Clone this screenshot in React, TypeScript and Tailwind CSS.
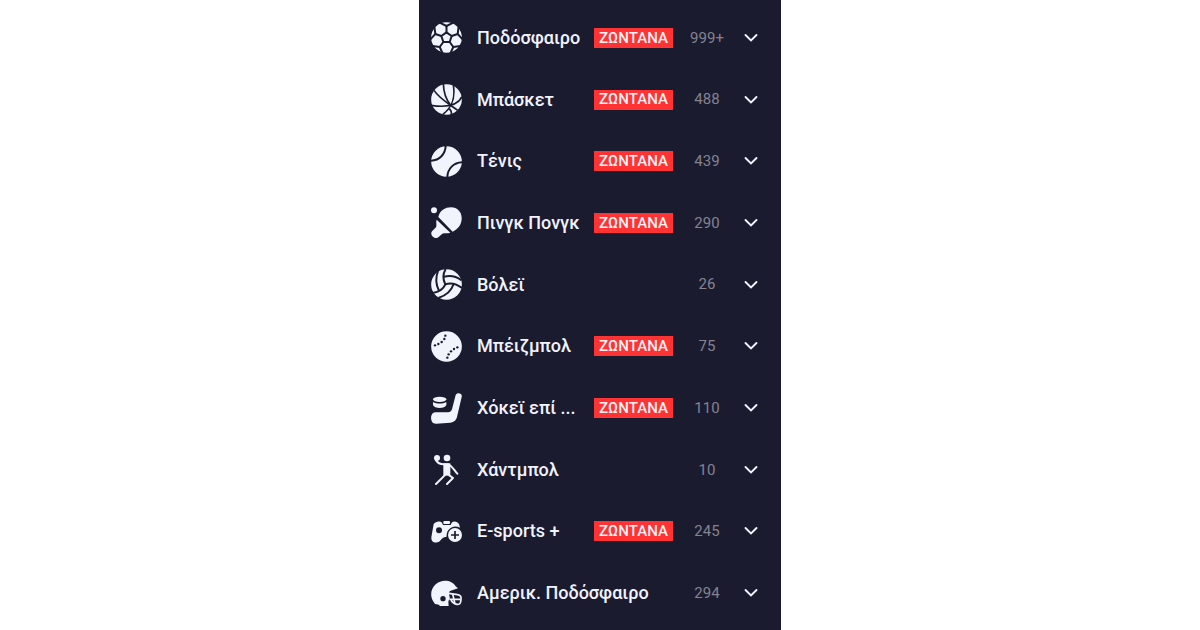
import { useState } from "react";
import type { ReactNode } from "react";
import clsx from "clsx";

type Sport = {
  name: string;
  count: string;
  live: boolean;
  icon: ReactNode;
};

// Icons share a 93 unit box, lines that cut into a shape use the panel colour.
const cut = "fill-none stroke-[#1b1b2f]";
const ball = <circle cx="46.5" cy="46.5" r="46" />;

const football = (
  <>
    {ball}
    <g className={cut} strokeWidth="6" strokeLinejoin="round">
      <path d="M46.5 31 62 42 56 60H37L31 42Z" />
      <path d="M46.5 31V12M62 42 80 36M56 60 67 75M37 60 26 75M31 42 13 36" />
      <path d="M26 2 46.5 12 67 2M83 14 80 36 95 52M88 72 67 75 58 94M35 94 26 75 5 72M-2 52 13 36 10 14" />
    </g>
  </>
);

const basketball = (
  <>
    {ball}
    <g className={cut} strokeWidth="5">
      <path d="M9 19C24 42 44 53 80 79" />
      <path d="M0 64C40 70 80 66 93 38" />
      <path d="M37 0C38 26 42 43 58 62" />
      <path d="M67 3C73 40 66 68 35 92" />
      <path d="M55 74C60 79 62 85 61 92" />
    </g>
  </>
);

const tennis = (
  <>
    {ball}
    <g className={cut} strokeWidth="6">
      <path d="M44 0C43 24 26 43 0 44" />
      <path d="M49 93C50 68 68 50 93 49" />
    </g>
  </>
);

const pingPong = (
  <>
    <circle cx="9" cy="10" r="9" />
    <path d="M22 30C26 11 42 1 60 1C79 1 92 15 92 34C92 52 82 66 65 74Z" />
    <path d="M17 38 58 77C49 80 40 77 34 80L22 91C10 99-5 84 3 73L15 61C18 54 14 46 17 38Z" />
  </>
);

const volleyball = (
  <>
    {ball}
    <g className={cut} strokeWidth="6">
      <path d="M44 0C35 15 36 32 43 46C60 40 77 45 93 57" />
      <path d="M43 46C37 60 23 69 5 72" />
      <path d="M21 6C13 27 14 46 24 65" />
      <path d="M39 23C57 19 76 22 91 34" />
      <path d="M68 45C61 66 44 80 22 87" />
    </g>
  </>
);

const baseball = (
  <>
    {ball}
    <g className="fill-[#1b1b2f]">
      {[
        [43, 14], [40, 24], [32, 33], [22, 39], [12, 43],
        [49, 80], [53, 70], [60, 61], [69, 54], [79, 49],
      ].map(([x, y]) => (
        <circle key={x} cx={x} cy={y} r="3.6" />
      ))}
    </g>
  </>
);

const hockey = (
  <>
    <ellipse cx="26" cy="19" rx="20" ry="8" />
    <path d="M6 27C18 33 34 33 46 27V36C42 48 10 48 6 36Z" />
    <path d="M74 6C78-3 95 0 92 12L78 72C75 83 69 87 58 89L16 92C-5 94-4 58 13 58H51C57 58 61 55 63 49Z" />
  </>
);

const handball = (
  <>
    <circle cx="18" cy="12" r="9" />
    <circle cx="48" cy="12" r="10" />
    <g className="fill-none stroke-[#f1f3fd]" strokeWidth="6" strokeLinecap="round" strokeLinejoin="round">
      <path d="M15 19C20 28 27 31 38 31H52C62 34 70 49 79 59" />
      <path d="M41 64 15 90M55 64 66 72 48 90" />
    </g>
    <path d="M37 28H58V65H37Z" />
  </>
);

const esports = (
  <>
    <path d="M39 15H55C58 15 58 24 55 24H39C36 24 36 15 39 15Z" />
    <path d="M8 24C14 15 28 14 33 20L36 27H59L62 20C68 14 79 16 84 24L87 35C68 25 48 37 47 57L46 63C33 61 29 78 19 79C7 82 0 76 1 64Z" />
    <circle cx="24" cy="43" r="9" className="fill-[#1b1b2f]" />
    <circle cx="72" cy="57" r="21" />
    <path className={cut} strokeWidth="5" d="M72 45V69M60 57H84" />
  </>
);

const helmet = (
  <>
    <path d="M11 76C-4 60-3 34 14 19C32 2 64 6 74 25L81 31L57 39C52 43 55 54 57 61C51 67 52 75 53 84H27Q24 78 11 78Z" />
    <circle cx="36" cy="62" r="8" className="fill-[#1b1b2f]" />
    <g className="fill-none stroke-[#f1f3fd]" strokeWidth="5" strokeLinejoin="round">
      <path d="M53 46 80 50C89 51 91 57 90 64C89 75 88 80 78 79C69 78 64 73 60 66" />
      <path d="M55 64H89M65 48 72 78" />
    </g>
  </>
);

const sports: Sport[] = [
  { name: "Ποδόσφαιρο", count: "999+", live: true, icon: football },
  { name: "Μπάσκετ", count: "488", live: true, icon: basketball },
  { name: "Τένις", count: "439", live: true, icon: tennis },
  { name: "Πινγκ Πονγκ", count: "290", live: true, icon: pingPong },
  { name: "Βόλεϊ", count: "26", live: false, icon: volleyball },
  { name: "Μπέιζμπολ", count: "75", live: true, icon: baseball },
  { name: "Χόκεϊ επί ...", count: "110", live: true, icon: hockey },
  { name: "Χάντμπολ", count: "10", live: false, icon: handball },
  { name: "E-sports +", count: "245", live: true, icon: esports },
  { name: "Αμερικ. Ποδόσφαιρο", count: "294", live: false, icon: helmet },
];

type SportRowProps = {
  sport: Sport;
  open: boolean;
  onToggle: () => void;
};

function SportRow({ sport, open, onToggle }: SportRowProps) {
  return (
    <li className="flex flex-1">
      <button
        type="button"
        aria-expanded={open}
        onClick={onToggle}
        className="flex min-h-14 w-full cursor-pointer items-center gap-3 pr-5 pl-3 text-left"
      >
        <svg viewBox="0 0 93 93" aria-hidden="true" className="mr-[3px] size-[31px] shrink-0 fill-[#f1f3fd]">
          {sport.icon}
        </svg>
        <span className="min-w-0 flex-1 truncate text-lg font-medium text-[#f1f3fd]">{sport.name}</span>
        {sport.live ? (
          <span className="flex h-5 w-[79px] shrink-0 items-center justify-center bg-[#ff3333] text-[15px] font-medium text-[#fdf1f4]">
            ΖΩΝΤΑΝΑ
          </span>
        ) : null}
        <span className="w-11 shrink-0 text-center text-[15px] text-[#83838f]">{sport.count}</span>
        <svg
          viewBox="0 0 20 20"
          aria-hidden="true"
          className={clsx("size-5 shrink-0 fill-none stroke-[#f1f3fd] transition-transform", open && "rotate-180")}
        >
          <path d="M4.5 7 10 12.500 15.5 7" strokeWidth="1.9" strokeLinecap="round" />
        </svg>
      </button>
    </li>
  );
}

export default function App() {
  const [openSport, setOpenSport] = useState<string | null>(null);

  return (
    <div className="min-h-screen bg-white font-['Roboto',sans-serif]">
      <nav className="mx-auto flex min-h-screen w-full max-w-[362px] flex-col bg-[#1b1b2f] pt-[7px] pb-1.5">
        <ul className="flex flex-1 flex-col">
          {sports.map((sport) => (
            <SportRow
              key={sport.name}
              sport={sport}
              open={openSport === sport.name}
              onToggle={() => setOpenSport(openSport === sport.name ? null : sport.name)}
            />
          ))}
        </ul>
      </nav>
    </div>
  );
}
